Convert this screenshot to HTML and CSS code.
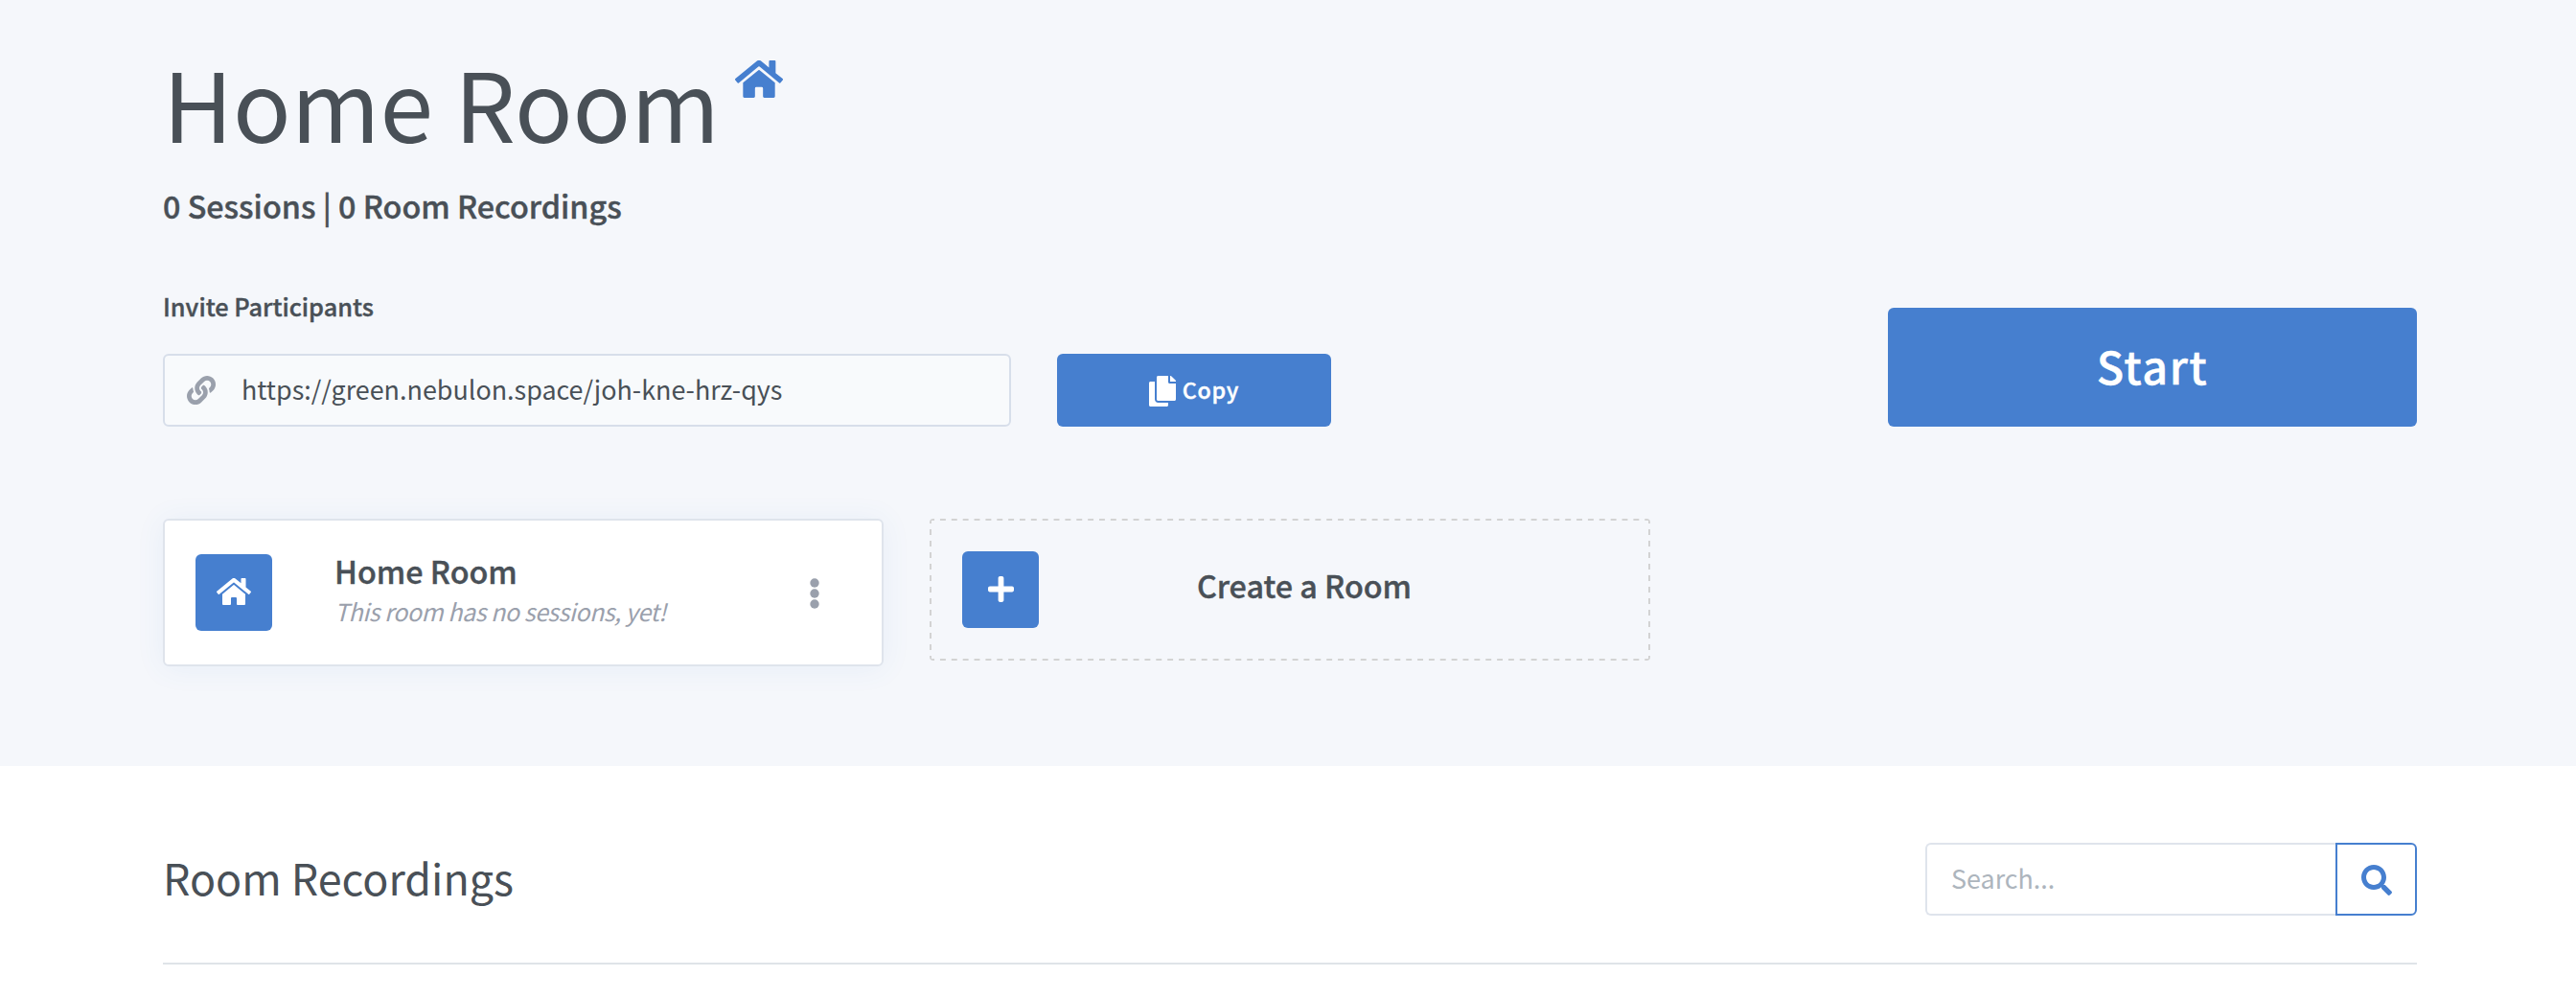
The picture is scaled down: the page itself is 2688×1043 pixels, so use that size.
FILE: index.html
```html
<!DOCTYPE html>
<html lang="en">
<head>
<meta charset="utf-8">
<title>Home Room</title>
<link rel="stylesheet" href="styles.css">
</head>
<body>
<svg class="sprite" aria-hidden="true">
  <symbol id="home" viewBox="0 32 576 448"><path d="M280.37 148.26L96 300.11V464a16 16 0 0 0 16 16l112.06-.29a16 16 0 0 0 15.92-16V368a16 16 0 0 1 16-16h64a16 16 0 0 1 16 16v95.64a16 16 0 0 0 16 16.05L464 480a16 16 0 0 0 16-16V300L295.67 148.26a12.19 12.19 0 0 0-15.3 0zM571.6 251.47L488 182.56V44.05a12 12 0 0 0-12-12h-56a12 12 0 0 0-12 12v72.61L318.47 43a48 48 0 0 0-61 0L4.34 251.47a12 12 0 0 0-1.6 16.9l25.5 31A12 12 0 0 0 45.15 301l235.22-193.74a12.19 12.19 0 0 1 15.3 0L530.9 301a12 12 0 0 0 16.9-1.6l25.5-31a12 12 0 0 0-1.7-16.93z"/></symbol>
</svg>

<main>
  <section class="hero">
    <header class="title">
      <h1>Home Room</h1>
      <svg class="title-icon"><use href="#home"/></svg>
    </header>
    <h4 class="stats">0 Sessions | 0 Room Recordings</h4>

    <div class="invite">
      <div class="invite-field">
        <label class="label" for="url">Invite Participants</label>
        <div class="url-box">
          <svg class="link-icon" viewBox="0 0 512 512"><path d="M326.612 185.391c59.747 59.809 58.927 155.698.36 214.59-.11.12-.24.25-.36.37l-67.2 67.2c-59.27 59.27-155.699 59.262-214.96 0-59.27-59.26-59.27-155.7 0-214.96l37.106-37.106c9.84-9.84 26.786-3.3 27.294 10.606.648 17.722 3.826 35.527 9.69 52.721 1.986 5.822.567 12.262-3.783 16.612l-13.087 13.087c-28.026 28.026-28.905 73.66-1.155 101.96 28.024 28.579 74.086 28.749 102.325.51l67.2-67.19c28.191-28.191 28.073-73.757 0-101.83-3.701-3.694-7.429-6.564-10.341-8.569a16.037 16.037 0 0 1-6.947-12.606c-.396-10.567 3.348-21.456 11.698-29.806l21.054-21.055c5.521-5.521 14.182-6.199 20.584-1.731a152.482 152.482 0 0 1 20.522 17.197zM467.547 44.449c-59.261-59.262-155.69-59.27-214.96 0l-67.2 67.2c-.12.12-.25.25-.36.37-58.566 58.892-59.387 154.781.36 214.59a152.454 152.454 0 0 0 20.521 17.196c6.402 4.468 15.064 3.789 20.584-1.731l21.054-21.055c8.35-8.35 12.094-19.239 11.698-29.806a16.037 16.037 0 0 0-6.947-12.606c-2.912-2.005-6.64-4.875-10.341-8.569-28.073-28.073-28.191-73.639 0-101.83l67.2-67.19c28.239-28.239 74.3-28.069 102.325.51 27.75 28.3 26.872 73.934-1.155 101.96l-13.087 13.087c-4.35 4.35-5.769 10.79-3.783 16.612 5.864 17.194 9.042 34.999 9.69 52.721.509 13.906 17.454 20.446 27.294 10.606l37.106-37.106c59.271-59.259 59.271-155.699.001-214.959z"/></svg>
          <input id="url" class="url" value="https://green.nebulon.space/joh-kne-hrz-qys" readonly>
        </div>
      </div>
      <button class="btn copy">
        <svg class="copy-icon" viewBox="0 0 448 512"><path d="M320 448v40c0 13.255-10.745 24-24 24H24c-13.255 0-24-10.745-24-24V120c0-13.255 10.745-24 24-24h72v296c0 30.879 25.121 56 56 56h168zm0-344V0H152c-13.255 0-24 10.745-24 24v368c0 13.255 10.745 24 24 24h272c13.255 0 24-10.745 24-24V128H344c-13.2 0-24-10.8-24-24zm120.971-31.029L375.029 7.029A24 24 0 0 0 358.059 0H352v96h96v-6.059a24 24 0 0 0-7.029-16.97z"/></svg>
        <span>Copy</span>
      </button>
      <button class="btn start">Start</button>
    </div>

    <div class="rooms">
      <article class="card">
        <div class="tile"><svg class="tile-home"><use href="#home"/></svg></div>
        <div class="card-text">
          <h4>Home Room</h4>
          <p>This room has no sessions, yet!</p>
        </div>
        <svg class="dots" viewBox="0 0 10 32"><circle cx="5" cy="5" r="4.7"/><circle cx="5" cy="16" r="4.7"/><circle cx="5" cy="27" r="4.7"/></svg>
      </article>
      <article class="card create">
        <div class="tile"><svg class="tile-plus" viewBox="0 32 448 448"><path d="M416 208H272V64c0-17.67-14.33-32-32-32h-32c-17.67 0-32 14.33-32 32v144H32c-17.67 0-32 14.33-32 32v32c0 17.67 14.33 32 32 32h144v144c0 17.67 14.33 32 32 32h32c17.67 0 32-14.33 32-32V304h144c17.67 0 32-14.33 32-32v-32c0-17.67-14.33-32-32-32z"/></svg></div>
        <h4>Create a Room</h4>
      </article>
    </div>
  </section>

  <section class="recordings">
    <div class="rec-head">
      <h2>Room Recordings</h2>
      <div class="search">
        <input class="search-input" placeholder="Search...">
        <button class="search-btn" aria-label="Search"><svg viewBox="0 0 512 512"><path d="M505 442.7L405.3 343c-4.5-4.5-10.6-7-17-7H372c27.6-35.3 44-79.7 44-128C416 93.1 322.9 0 208 0S0 93.1 0 208s93.1 208 208 208c48.3 0 92.7-16.4 128-44v16.3c0 6.4 2.5 12.5 7 17l99.7 99.7c9.4 9.4 24.6 9.4 33.9 0l28.3-28.3c9.4-9.4 9.4-24.6.1-34zM208 336c-70.7 0-128-57.2-128-128 0-70.7 57.2-128 128-128 70.7 0 128 57.2 128 128 0 70.7-57.2 128-128 128z"/></svg></button>
      </div>
    </div>
    <hr>
  </section>
</main>
</body>
</html>
```
FILE: styles.css
```css
* { box-sizing: border-box; margin: 0; padding: 0; }

body {
  background: #fff;
  color: #495057;
  font-family: "Noto Sans CJK SC", "Noto Sans", sans-serif;
  font-size: 26.9px;
  overflow: hidden;
}

svg { display: block; fill: currentColor; flex: none; }
.sprite { display: none; }
input, button { font: inherit; color: inherit; border: 0; outline: 0; }
h1, h2 { font-weight: 400; }
h4 { font-size: 32.3px; font-weight: 500; line-height: 40px; }
h4, .label, .btn { -webkit-text-stroke: .4px currentColor; }
.btn svg { -webkit-text-stroke: 0; }

.hero {
  height: 799px;
  padding: 50px 166px 0 170px;
  background: #f5f7fb;
}

.title { display: flex; gap: 16px; height: 112px; }
.title h1 { font-size: 100.2px; line-height: 112px; }
.title-icon { width: 50px; height: 39px; margin-top: 13px; color: #467fcf; }

.stats { margin-top: 32px; }

.invite { display: flex; align-items: flex-end; margin-top: 65px; height: 146px; }
.invite-field { width: 885px; margin-right: 48px; }
.label {
  display: block;
  margin-bottom: 30px;
  font-size: 25.3px;
  font-weight: 500;
  line-height: 40px;
}
.url-box {
  display: flex;
  align-items: center;
  height: 76px;
  padding-left: 23px;
  border: 2px solid #d7deea;
  border-radius: 6px;
  background: #f8fafc;
}
.link-icon { width: 30px; height: 30px; color: #9aa0ac; }
.url { flex: 1; height: 40px; margin-left: 27px; padding-bottom: 3px; background: none; }

.btn {
  border-radius: 6px;
  background: #467fcf;
  color: #fff;
  font-weight: 500;
}
.copy {
  display: flex;
  align-items: center;
  justify-content: center;
  gap: 7px;
  width: 286px;
  height: 76px;
  font-size: 23.2px;
  letter-spacing: .8px;
}
.copy span { padding-bottom: 2px; }
.copy-icon { width: 28px; height: 32px; margin-top: 1px; }
.start {
  width: 552px;
  height: 124px;
  margin-left: auto;
  padding-bottom: 5px;
  font-size: 46.8px;
  letter-spacing: 1.5px;
}

.rooms { display: flex; align-items: flex-start; gap: 48px; margin-top: 96px; }
.card {
  display: flex;
  align-items: center;
  width: 752px;
  height: 154px;
  padding: 0 65px 0 32px;
  border: 2px solid #dfe4ec;
  border-radius: 6px;
  background: #fff;
  box-shadow: 0 2px 30px rgba(70, 127, 207, .08);
}
.card-text { flex: 1; margin: -6px 0 0 65px; }
.card-text p {
  margin-top: 4px;
  color: #9aa0ac;
  font-size: 25px;
  font-style: italic;
  letter-spacing: -.45px;
  line-height: 36px;
}
.tile {
  display: flex;
  align-items: center;
  justify-content: center;
  flex: none;
  width: 80px;
  height: 80px;
  border-radius: 6px;
  background: #467fcf;
  color: #fff;
}
.tile-home { width: 36px; height: 28px; margin-bottom: 2px; }
.tile-plus { width: 27px; height: 27px; margin-bottom: 2px; }
.dots { width: 10px; height: 32px; margin-top: 2px; color: #9aa0ac; }

.create {
  --dash: #d3d3d3 0 50%, transparent 50%;
  height: 148px;
  padding: 0 84px 0 34px;
  border: 0;
  border-radius: 4px;
  background:
    linear-gradient(90deg, var(--dash)) -.9px 0 / 11.86px 2px repeat-x,
    linear-gradient(90deg, var(--dash)) -.9px 100% / 11.86px 2px repeat-x,
    linear-gradient(var(--dash)) 0 -1px / 2px 12px repeat-y,
    linear-gradient(var(--dash)) 100% -1px / 2px 12px repeat-y;
  box-shadow: none;
}
.create h4 { flex: 1; margin-top: -10px; text-align: center; }

.recordings { padding: 80px 166px 0 170px; }
.rec-head { display: flex; align-items: center; justify-content: space-between; height: 76px; }
.rec-head h2 { font-size: 44.8px; line-height: 71px; padding-bottom: 5px; }
.search { display: flex; width: 513px; height: 76px; }
.search-input {
  width: 428px;
  padding: 0 0 3px 25px;
  border: 2px solid #dfe4ec;
  border-right: 0;
  border-radius: 6px 0 0 6px;
}
.search-input::placeholder { color: #adb5bd; }
.search-btn {
  display: flex;
  align-items: center;
  justify-content: center;
  width: 85px;
  border: 2px solid #467fcf;
  border-radius: 0 6px 6px 0;
  background: none;
  color: #467fcf;
}
.search-btn svg { width: 32px; height: 32px; margin-top: 2px; }
hr { height: 2px; margin-top: 49px; border: 0; background: #dfe4e8; }
```
